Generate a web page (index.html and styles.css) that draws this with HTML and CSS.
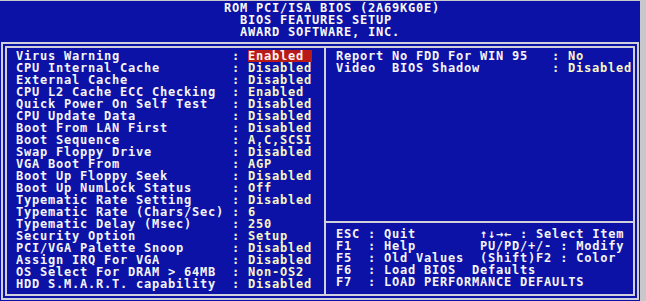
FILE: index.html
```html
<!DOCTYPE html>
<html>
<head>
<meta charset="utf-8">
<link rel="stylesheet" href="styles.css">
</head>
<body>
<div class="screen">
  <header class="title">
    <div class="t t1">ROM PCI/ISA BIOS (2A69KG0E)</div>
    <div class="t t2">BIOS FEATURES SETUP</div>
    <div class="t t2">AWARD SOFTWARE, INC.</div>
  </header>
  <div class="frame">
    <div class="inner">
      <section class="left">
        <div class="row"><span class="lbl">Virus Warning</span><span class="col">:</span><span class="val"><span class="hl">Enabled</span></span></div>
        <div class="row"><span class="lbl">CPU Internal Cache</span><span class="col">:</span><span class="val">Disabled</span></div>
        <div class="row"><span class="lbl">External Cache</span><span class="col">:</span><span class="val">Disabled</span></div>
        <div class="row"><span class="lbl">CPU L2 Cache ECC Checking</span><span class="col">:</span><span class="val">Enabled</span></div>
        <div class="row"><span class="lbl">Quick Power On Self Test</span><span class="col">:</span><span class="val">Disabled</span></div>
        <div class="row"><span class="lbl">CPU Update Data</span><span class="col">:</span><span class="val">Disabled</span></div>
        <div class="row"><span class="lbl">Boot From LAN First</span><span class="col">:</span><span class="val">Disabled</span></div>
        <div class="row"><span class="lbl">Boot Sequence</span><span class="col">:</span><span class="val">A,C,SCSI</span></div>
        <div class="row"><span class="lbl">Swap Floppy Drive</span><span class="col">:</span><span class="val">Disabled</span></div>
        <div class="row"><span class="lbl">VGA Boot From</span><span class="col">:</span><span class="val">AGP</span></div>
        <div class="row"><span class="lbl">Boot Up Floppy Seek</span><span class="col">:</span><span class="val">Disabled</span></div>
        <div class="row"><span class="lbl">Boot Up NumLock Status</span><span class="col">:</span><span class="val">Off</span></div>
        <div class="row"><span class="lbl">Typematic Rate Setting</span><span class="col">:</span><span class="val">Disabled</span></div>
        <div class="row"><span class="lbl">Typematic Rate (Chars/Sec)</span><span class="col">:</span><span class="val">6</span></div>
        <div class="row"><span class="lbl">Typematic Delay (Msec)</span><span class="col">:</span><span class="val">250</span></div>
        <div class="row"><span class="lbl">Security Option</span><span class="col">:</span><span class="val">Setup</span></div>
        <div class="row"><span class="lbl">PCI/VGA Palette Snoop</span><span class="col">:</span><span class="val">Disabled</span></div>
        <div class="row"><span class="lbl">Assign IRQ For VGA</span><span class="col">:</span><span class="val">Disabled</span></div>
        <div class="row"><span class="lbl">OS Select For DRAM &gt; 64MB</span><span class="col">:</span><span class="val">Non-OS2</span></div>
        <div class="row"><span class="lbl">HDD S.M.A.R.T. capability</span><span class="col">:</span><span class="val">Disabled</span></div>
      </section>
      <section class="right">
        <div class="opts">
          <div class="row"><span class="lbl">Report No FDD For WIN 95</span><span class="col">:</span><span class="val">No</span></div>
          <div class="row"><span class="lbl">Video  BIOS Shadow</span><span class="col">:</span><span class="val">Disabled</span></div>
        </div>
        <div class="help">
          <div class="hrow">ESC : Quit        ↑↓→← : Select Item</div>
          <div class="hrow">F1  : Help        PU/PD/+/- : Modify</div>
          <div class="hrow">F5  : Old Values  (Shift)F2 : Color</div>
          <div class="hrow">F6  : Load BIOS  Defaults</div>
          <div class="hrow">F7  : LOAD PERFORMANCE DEFAULTS</div>
        </div>
      </section>
    </div>
  </div>
</div>
</body>
</html>
```

FILE: styles.css
```css
* { box-sizing: border-box; }
html, body { margin: 0; padding: 0; }
body {
  background: #c8c8cc;
  width: 646px;
  height: 301px;
  overflow: hidden;
  font-family: "DejaVu Sans Mono", "Liberation Mono", monospace;
  font-weight: bold;
  font-size: 12px;
  letter-spacing: 0.78px;
}
.screen {
  width: 640px;
  height: 300px;
  margin-top: 1px;
  background: #0c12a6;
  display: flex;
  flex-direction: column;
  color: #f4f4f8;
}
.title {
  height: 37px;
  padding-top: 1px;
  display: flex;
  flex-direction: column;
}
.t {
  height: 12px;
  line-height: 12px;
  white-space: pre;
  color: #f8f8f8;
}
.t1 { padding-left: 224px; }
.t2 { padding-left: 240px; }
.frame {
  flex: 1;
  margin: 4px 1px 1px 1px;
  border: 2px solid #cfd0dc;
  padding: 2px;
  display: flex;
}
.inner {
  flex: 1;
  border: 2px solid #cfd0dc;
  display: grid;
  grid-template-columns: 317px 1fr;
}
.left {
  padding: 2px 0 0 9px;
}
.right {
  border-left: 2px solid #cfd0dc;
  display: flex;
  flex-direction: column;
}
.opts {
  height: 175px;
  padding: 2px 0 0 10px;
  border-bottom: 2px solid #cfd0dc;
}
.help {
  flex: 1;
  padding: 5px 0 0 10px;
}
.row {
  display: grid;
  grid-template-columns: 216px 16px auto;
  height: 12px;
  line-height: 12px;
}
.lbl { white-space: pre; color: #f4f4fa; }
.col { color: #f4f4e0; }
.val { white-space: pre; color: #f8f6c8; }
.hl {
  display: inline-block;
  width: 64px;
  background: #b81a1a;
  color: #fff4f0;
}
.hrow {
  height: 12px;
  line-height: 12px;
  white-space: pre;
  color: #f4f4f8;
}
```
